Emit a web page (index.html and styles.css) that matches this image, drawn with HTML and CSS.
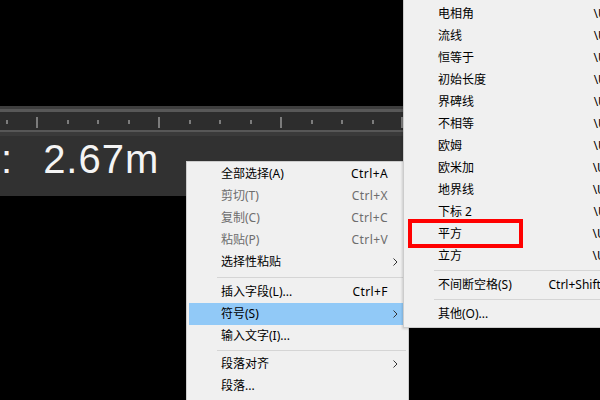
FILE: index.html
```html
<!DOCTYPE html>
<html lang="zh-CN">
<head>
<meta charset="utf-8">
<title>多行文字 右键菜单</title>
<link rel="stylesheet" href="styles.css">
</head>
<body>
<div class="scene">
  <div class="top-space"></div>
  <div class="ruler">
    <div class="ruler-line-a"></div>
    <div class="ruler-line-b"></div>
    <svg class="ruler-ticks" width="600" height="18" viewBox="0 0 600 18">
      <g class="tick-small"><rect x="6" y="8" width="2" height="4"/><rect x="67" y="8" width="2" height="4"/><rect x="97" y="8" width="2" height="4"/><rect x="128" y="8" width="2" height="4"/><rect x="189" y="8" width="2" height="4"/><rect x="219" y="8" width="2" height="4"/><rect x="250" y="8" width="2" height="4"/><rect x="311" y="8" width="2" height="4"/><rect x="341" y="8" width="2" height="4"/><rect x="372" y="8" width="2" height="4"/></g>
      <g class="tick-big"><rect x="36" y="5" width="2" height="11"/><rect x="158" y="5" width="2" height="11"/><rect x="280" y="5" width="2" height="11"/><rect x="401" y="5" width="2" height="11"/></g>
    </svg>
    <div class="ruler-line-c"></div>
    <div class="ruler-line-d"></div>
  </div>
  <div class="input-band">
    <span class="colon">:</span>
    <span class="value">2.67m</span>
  </div>
</div>

<div class="menu context-menu">
  <div class="item"><span class="label">全部选择(A)</span><span class="key">Ctrl+A</span><span class="arrow"></span></div>
  <div class="item disabled"><span class="label">剪切(T)</span><span class="key">Ctrl+X</span><span class="arrow"></span></div>
  <div class="item disabled"><span class="label">复制(C)</span><span class="key">Ctrl+C</span><span class="arrow"></span></div>
  <div class="item disabled"><span class="label">粘贴(P)</span><span class="key">Ctrl+V</span><span class="arrow"></span></div>
  <div class="item"><span class="label">选择性粘贴</span><span class="key"></span><span class="arrow"><svg width="5" height="8" viewBox="0 0 5 8"><polyline points="0.5,0.5 4,4 0.5,7.5"/></svg></span></div>
  <div class="sep sep-a"></div>
  <div class="item"><span class="label">插入字段(L)...</span><span class="key">Ctrl+F</span><span class="arrow"></span></div>
  <div class="item active"><span class="label">符号(S)</span><span class="key"></span><span class="arrow"><svg width="5" height="8" viewBox="0 0 5 8"><polyline points="0.5,0.5 4,4 0.5,7.5"/></svg></span></div>
  <div class="item"><span class="label">输入文字(I)...</span><span class="key"></span><span class="arrow"></span></div>
  <div class="sep sep-b"></div>
  <div class="item"><span class="label">段落对齐</span><span class="key"></span><span class="arrow"><svg width="5" height="8" viewBox="0 0 5 8"><polyline points="0.5,0.5 4,4 0.5,7.5"/></svg></span></div>
  <div class="item"><span class="label">段落...</span><span class="key"></span><span class="arrow"></span></div>
</div>

<div class="menu submenu">
  <div class="item"><span class="label">电相角</span><span class="key">\U+0278</span><span class="arrow"></span></div>
  <div class="item"><span class="label">流线</span><span class="key">\U+E101</span><span class="arrow"></span></div>
  <div class="item"><span class="label">恒等于</span><span class="key">\U+2261</span><span class="arrow"></span></div>
  <div class="item"><span class="label">初始长度</span><span class="key">\U+E200</span><span class="arrow"></span></div>
  <div class="item"><span class="label">界碑线</span><span class="key">\U+E102</span><span class="arrow"></span></div>
  <div class="item"><span class="label">不相等</span><span class="key">\U+2260</span><span class="arrow"></span></div>
  <div class="item"><span class="label">欧姆</span><span class="key">\U+2126</span><span class="arrow"></span></div>
  <div class="item"><span class="label">欧米加</span><span class="key">\U+03A9</span><span class="arrow"></span></div>
  <div class="item"><span class="label">地界线</span><span class="key">\U+214A</span><span class="arrow"></span></div>
  <div class="item"><span class="label">下标 2</span><span class="key">\U+2082</span><span class="arrow"></span></div>
  <div class="item"><span class="label">平方</span><span class="key">\U+00B2</span><span class="arrow"></span></div>
  <div class="item"><span class="label">立方</span><span class="key">\U+00B3</span><span class="arrow"></span></div>
  <div class="sep sep-s"></div>
  <div class="item"><span class="label">不间断空格(S)</span><span class="key">Ctrl+Shift+Space</span><span class="arrow"></span></div>
  <div class="sep sep-s"></div>
  <div class="item"><span class="label">其他(O)...</span><span class="key"></span><span class="arrow"></span></div>
</div>

<div class="mark-box"></div>
</body>
</html>
```

FILE: styles.css
```css
html, body {
  margin: 0;
  padding: 0;
  width: 600px;
  height: 400px;
  overflow: hidden;
  background: #000;
}

body {
  position: relative;
}

.scene {
  display: flex;
  flex-direction: column;
}

.top-space {
  height: 106px;
}

.ruler {
  display: flex;
  flex-direction: column;
}

.ruler-line-a { height: 3px; background: #3e3e3e; }
.ruler-line-b { height: 3px; background: #585858; }
.ruler-ticks { display: block; background: #2d2d2d; }
.tick-small rect, .tick-big rect { fill: #7c7c7c; }
.ruler-line-c { height: 2px; background: #575757; }
.ruler-line-d { height: 4px; background: #3a3a3a; }

.input-band {
  height: 60px;
  background: #313131;
  display: flex;
  align-items: flex-start;
  font-family: "Liberation Sans", Arial, sans-serif;
  font-size: 40px;
  line-height: 46px;
  color: #f4f4f4;
}

.colon {
  margin-left: 1px;
}

.value {
  margin-left: 31px;
  letter-spacing: 1px;
}

.menu {
  position: absolute;
  box-sizing: border-box;
  background: #f0f0f0;
  border: 1px solid #cccccc;
  padding: 1px 2px 2px 2px;
  font-family: "Noto Sans", "Noto Sans CJK SC", sans-serif;
  font-size: 12px;
  color: #000;
}

.context-menu {
  left: 186px;
  top: 161px;
  width: 223px;
  padding-bottom: 6px;
}

.context-menu .key {
  letter-spacing: 0.4px;
}

.submenu {
  left: 403px;
  top: 0;
  width: 259px;
  border-top: none;
  padding-top: 3px;
  box-shadow: -1px 1px 2px rgba(0, 0, 0, 0.15);
}

.item {
  display: grid;
  grid-template-columns: 1fr auto 18px;
  height: 22px;
  line-height: 22px;
  padding-left: 32px;
  white-space: nowrap;
}

.item.active {
  background: #91c9f7;
}

.item.disabled {
  color: #6d6d6d;
}

.arrow {
  display: flex;
  align-items: center;
  padding-left: 5px;
}

.arrow svg polyline {
  fill: none;
  stroke: #333;
  stroke-width: 1;
}

.sep {
  height: 1px;
  background: #d5d5d5;
  margin-left: 28px;
}

.sep-a { margin-top: 4px; margin-bottom: 3px; }
.sep-b { margin-top: 3px; margin-bottom: 2px; }
.sep-s { margin-top: 3px; margin-bottom: 3px; }

.mark-box {
  position: absolute;
  left: 408px;
  top: 219px;
  width: 115px;
  height: 29px;
  box-sizing: border-box;
  border: 4px solid #ff0000;
}
```
